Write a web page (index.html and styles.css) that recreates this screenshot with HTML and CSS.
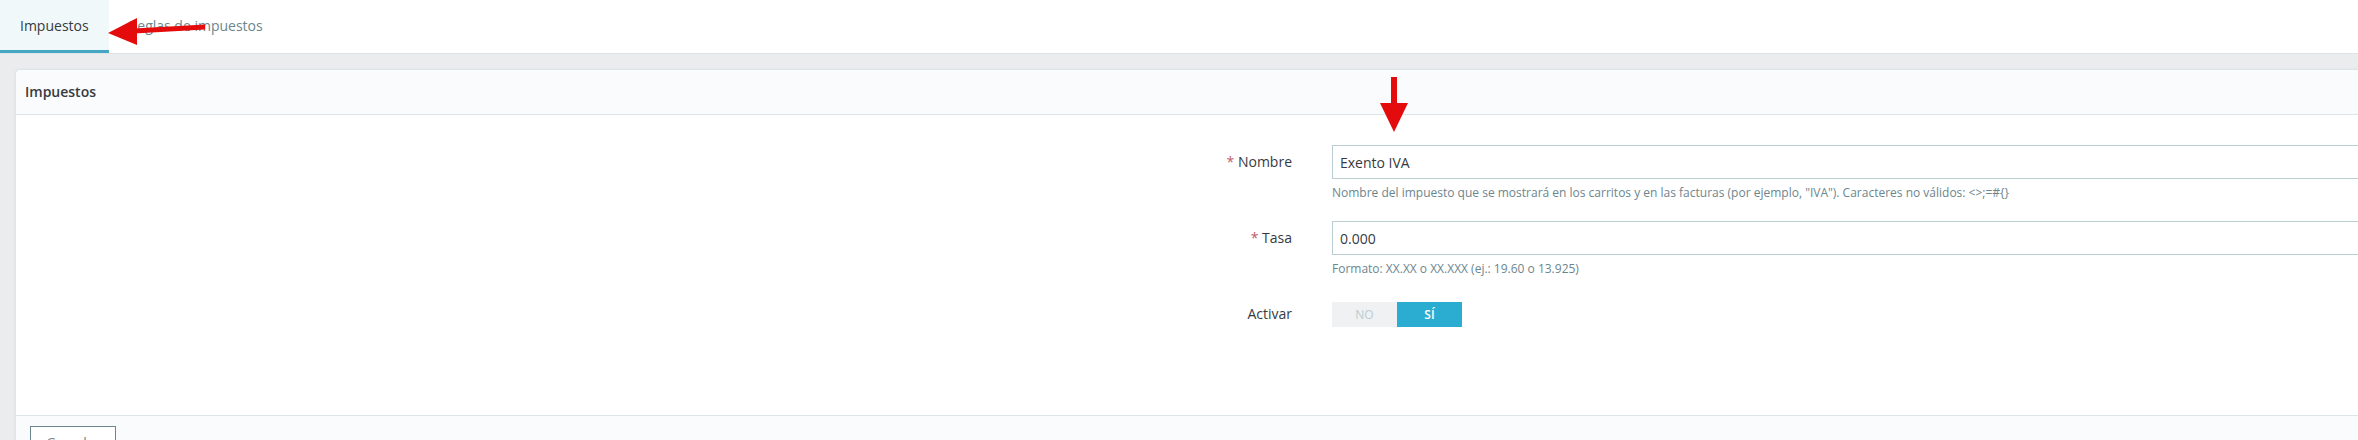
FILE: index.html
```html
<!DOCTYPE html>
<html lang="es">
<head>
<meta charset="utf-8">
<title>Impuestos</title>
<link rel="stylesheet" href="styles.css">
</head>
<body>
<nav class="tabs">
  <a class="tab active">Impuestos</a>
  <a class="tab">Reglas de impuestos</a>
</nav>
<main class="content">
  <section class="panel">
    <header class="panel-heading">Impuestos</header>
    <div class="form-body">
      <div class="form-row">
        <label class="control-label"><span class="req">*</span> Nombre</label>
        <div class="field">
          <input class="text-input" type="text" value="Exento IVA">
          <p class="help">Nombre del impuesto que se mostrará en los carritos y en las facturas (por ejemplo, "IVA"). Caracteres no válidos: &lt;&gt;;=#{}</p>
        </div>
      </div>
      <div class="form-row">
        <label class="control-label"><span class="req">*</span> Tasa</label>
        <div class="field">
          <input class="text-input" type="text" value="0.000">
          <p class="help">Formato: XX.XX o XX.XXX (ej.: 19.60 o 13.925)</p>
        </div>
      </div>
      <div class="form-row last">
        <label class="control-label">Activar</label>
        <div class="field switch-field">
          <div class="switch">
            <span class="switch-opt">NO</span>
            <span class="switch-opt on">SÍ</span>
          </div>
        </div>
      </div>
    </div>
    <footer class="panel-footer">
      <button class="btn">Guardar</button>
    </footer>
  </section>
</main>
<svg class="annot annot-left" viewBox="0 0 110 42" width="110" height="42">
  <polygon points="8,23 37,8 37,35" fill="#e30b0b"/>
  <polygon points="34,18.5 105,14.5 105,19.5 34,23.5" fill="#e30b0b"/>
</svg>
<svg class="annot annot-down" viewBox="0 0 32 60" width="32" height="60">
  <rect x="13" y="2" width="6" height="28" fill="#e30b0b"/>
  <polygon points="2,28 30,28 16,57" fill="#e30b0b"/>
</svg>
</body>
</html>
```
FILE: styles.css
```css
html, body {
  margin: 0;
  padding: 0;
  height: 440px;
  overflow: hidden;
}
body {
  position: relative;
  width: 2358px;
  font-family: "Open Sans", "DejaVu Sans", sans-serif;
  color: #363a41;
  background: #ebeced;
}
.tabs {
  display: flex;
  height: 54px;
  box-sizing: border-box;
  background: #fff;
  border-bottom: 1px solid #dfe3e5;
}
.tab {
  display: flex;
  align-items: center;
  padding: 0 20px;
  height: 53px;
  box-sizing: border-box;
  font-size: 14px;
  color: #6c868e;
  border-bottom: 3px solid transparent;
}
.tab.active {
  background: #f1f8fa;
  color: #363a41;
  border-bottom-color: #45a6c4;
}
.content {
  padding: 15px 0 0 15px;
}
.panel {
  width: 2500px;
  background: #fff;
  border: 1px solid #dbe6e9;
  border-radius: 5px;
  box-shadow: 0 0 3px rgba(0, 0, 0, 0.05);
}
.panel-heading {
  height: 44px;
  line-height: 44px;
  padding-left: 9px;
  font-size: 14px;
  font-weight: 600;
  background: #fafbfc;
  border-bottom: 1px solid #dbe6e9;
  border-radius: 5px 5px 0 0;
}
.form-body {
  padding: 30px 0 84px;
}
.form-row {
  display: grid;
  grid-template-columns: 1276px 1300px;
  column-gap: 40px;
  margin-bottom: 19px;
}
.form-row.last {
  margin-bottom: 0;
}
.control-label {
  text-align: right;
  font-size: 14px;
  line-height: 34px;
  color: #363a41;
}
.req {
  color: #c05c67;
}
.text-input {
  display: block;
  width: 100%;
  height: 34px;
  box-sizing: border-box;
  margin: 0;
  padding: 0 7px;
  border: 1px solid #bbcdd2;
  border-radius: 0;
  font-family: inherit;
  font-size: 14px;
  color: #363a41;
  background: #fff;
}
.help {
  margin: 5px 0 0;
  font-size: 12px;
  line-height: 18px;
  color: #6c868e;
}
.switch-field {
  height: 34px;
  display: flex;
  align-items: center;
}
.switch {
  display: flex;
  width: 130px;
  height: 25px;
}
.switch-opt {
  flex: 1;
  display: flex;
  align-items: center;
  justify-content: center;
  font-size: 12px;
  color: #bbcdd2;
  background: #eff1f2;
}
.switch-opt.on {
  color: #fff;
  font-weight: 600;
  background: #2badd1;
}
.panel-footer {
  padding: 10px 14px;
  background: #fafbfc;
  border-top: 1px solid #dbe6e9;
}
.btn {
  display: block;
  margin: 0;
  padding: 6px 15px 10px;
  font-family: inherit;
  font-size: 14px;
  line-height: 20px;
  color: #6c868e;
  background: #fff;
  border: 1px solid #6c868e;
  border-radius: 0;
}
.annot {
  position: absolute;
  pointer-events: none;
}
.annot-left {
  left: 100px;
  top: 10px;
}
.annot-down {
  left: 1378px;
  top: 75px;
}
```
